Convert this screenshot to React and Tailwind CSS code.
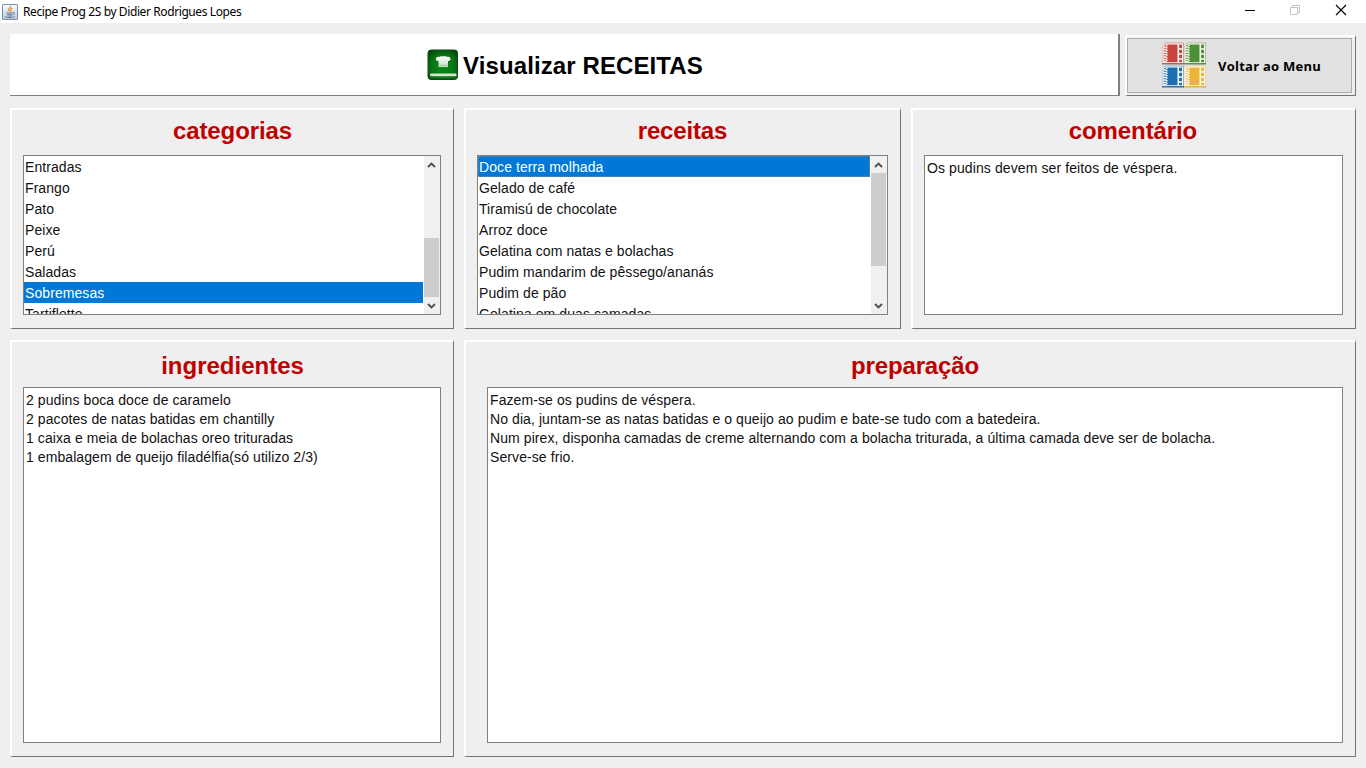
import React from 'react';

const categories = ['Entradas', 'Frango', 'Pato', 'Peixe', 'Perú', 'Saladas', 'Sobremesas', 'Tartiflette'];
const recipes = [
  'Doce terra molhada',
  'Gelado de café',
  'Tiramisú de chocolate',
  'Arroz doce',
  'Gelatina com natas e bolachas',
  'Pudim mandarim de pêssego/ananás',
  'Pudim de pão',
  'Gelatina em duas camadas',
];
const ingredients = [
  '2 pudins boca doce de caramelo',
  '2 pacotes de natas batidas em chantilly',
  '1 caixa e meia de bolachas oreo trituradas',
  '1 embalagem de queijo filadélfia(só utilizo 2/3)',
];
const preparation = [
  'Fazem-se os pudins de véspera.',
  'No dia, juntam-se as natas batidas e o queijo ao pudim e bate-se tudo com a batedeira.',
  'Num pirex, disponha camadas de creme alternando com a bolacha triturada, a última camada deve ser de bolacha.',
  'Serve-se frio.',
];

function JavaIcon() {
  return (
    <svg width="16" height="16" viewBox="0 0 16 16" fill="none">
      <defs>
        <linearGradient id="java" x1="0" y1="0" x2="0" y2="1">
          <stop stopColor="#fdfdfd" />
          <stop offset="1" stopColor="#b9cadb" />
        </linearGradient>
      </defs>
      <rect x="0.5" y="0.5" width="15" height="15" rx="0.5" fill="url(#java)" stroke="#7690ab" />
      <path d="M8.800 1.800c.8 1.700-3.200 2.500-2.300 4.200.3.600.9 1 .9 1.600M10.300 4.200c-1.500.7-2.400 1.400-1.600 2.300.5.600.2 1-.3 1.400" stroke="#e2963f" strokeWidth="1.300" />
      <path d="M4.500 8.700c1.800.7 4.500.6 6.200 0M5.200 10.300c1.500.6 3.700.6 5.200 0M5.600 11.700c1.200.5 3 .5 4.200 0M11 8.600c2.200-.5 2 1.700.2 2.200M3.200 12.700c2.300 1.100 7.300 1 9.400-.1" stroke="#587896" strokeWidth="1" />
    </svg>
  );
}

function BookIcon() {
  return (
    <svg width="32" height="32" viewBox="0 0 32 32">
      <defs>
        <radialGradient id="cover" cx="0.5" cy="0.55" r="0.65">
          <stop stopColor="#0a8a18" />
          <stop offset="0.6" stopColor="#067512" />
          <stop offset="1" stopColor="#04480c" />
        </radialGradient>
        <linearGradient id="hat" x1="0" y1="0" x2="0" y2="1">
          <stop stopColor="#ffffff" />
          <stop offset="1" stopColor="#c3dfc3" />
        </linearGradient>
      </defs>
      <rect x="1" y="1" width="29.500" height="29.500" rx="3" fill="url(#cover)" stroke="#0a4a12" />
      <path d="M3.500 24.500h26v2.800h-25c-1.500 0-2-1.300-1-2.800z" fill="#cfe8cb" />
      <path d="M2.500 28.500h27" stroke="#1c6d22" />
      <path d="M11.500 18v-6c-2 .3-2.800-.8-2.600-2.200.2-1.700 1.900-2.500 3.400-1.900.8-.9 2-.9 2.700-.3.700-.6 1.800-.6 2.500 0 .8-.6 2-.5 2.700.3 1.500-.6 3.200.2 3.300 1.900.1 1.400-.8 2.500-2.500 2.200v6z" fill="url(#hat)" />
      <path d="M11.800 16.300h8.900" stroke="#79ac79" strokeWidth="0.600" />
    </svg>
  );
}

function Notebook({ x, y, color, dark }) {
  return (
    <g transform={`translate(${x} ${y})`}>
      <path d="M3.500 .5h18V21H.5V3z" fill={color} stroke={color} strokeOpacity="0.45" />
      <path d="M3.500 1.300h17.200v19.200H1V3.300z" fill="none" stroke="#fffaf6" strokeWidth="1.300" />
      <path d="M4.800 2v18.500" stroke="#fffaf6" strokeWidth="1.500" strokeDasharray="1.500 1" />
      <path d="M1.500 4.500h3M1.500 7h3M1.500 9.500h3M1.500 12h3M1.500 14.500h3M1.500 17h3M1.500 19.300h3" stroke="#fffaf6" strokeWidth="1.400" />
      <path d="M16.300 1.500v19M16.300 6.500h4.500M16.300 11.500h4.500M16.300 16.500h4.500" stroke="#fffaf6" strokeWidth="1.600" />
      <path d="M0 21.300h22" stroke={dark} strokeWidth="1.200" />
    </g>
  );
}

function MenuIcon() {
  return (
    <svg width="46" height="48" viewBox="0 0 46 48" className="shrink-0">
      <Notebook x={1} y={0.5} color="#c9443e" dark="#8c5048" />
      <Notebook x={23} y={0.5} color="#4c9138" dark="#47743c" />
      <Notebook x={1} y={23.5} color="#1b6fb5" dark="#1b4f85" />
      <Notebook x={23} y={23.5} color="#edb536" dark="#d2a344" />
    </svg>
  );
}

function Panel({ title, className, titleClass = '', children }) {
  return (
    <section className={`flex flex-col border-t-2 border-l-2 border-t-white border-l-white border-r border-b border-r-[#747474] border-b-[#747474] ${className}`}>
      <h2 className={`shrink-0 text-center text-[24px] leading-[28px] font-bold text-[#c00000] ${titleClass}`}>{title}</h2>
      {children}
    </section>
  );
}

function Chevron({ up }) {
  return (
    <svg width="16" height="17" viewBox="0 0 16 17" fill="none" className="shrink-0">
      <path d={up ? 'M4 11 7.500 7.500 11 11' : 'M4 7 7.500 10.500 11 7'} stroke="#505050" strokeWidth="1.900" />
    </svg>
  );
}

function ScrollList({ items, selected, focus, before, thumb, className }) {
  return (
    <div className={`flex h-[160px] overflow-hidden border border-[#808080] bg-white ${className}`}>
      <ul className="min-w-0 flex-1 pr-px">
        {items.map((item) => (
          <li
            key={item}
            className={`h-[21px] pl-px text-[14px] leading-[22px] tracking-[0.08px] whitespace-nowrap ${
              item === selected ? 'bg-[#0078d7] text-white' : ''
            } ${item === selected && focus ? 'outline-1 -outline-offset-1 outline-dotted outline-[#7f8a92]' : ''}`}
          >
            {item}
          </li>
        ))}
      </ul>
      <div className="flex w-[16px] flex-col bg-[#f0f0f0]">
        <Chevron up />
        <div className={`shrink-0 ${before}`} />
        <div className={`mr-px shrink-0 bg-[#cdcdcd] ${thumb}`} />
        <div className="flex-1" />
        <Chevron />
      </div>
    </div>
  );
}

function TextArea({ lines, className }) {
  return (
    <div className={`border border-[#808080] bg-white px-[2px] pt-[3px] text-[14px] leading-[19px] whitespace-nowrap ${className}`}>
      {lines.map((line) => (
        <p key={line}>{line}</p>
      ))}
    </div>
  );
}

export default function App() {
  return (
    <div className="flex h-[768px] w-[1366px] flex-col overflow-hidden bg-[#efefef] font-['Liberation_Sans',Arial,sans-serif] text-[#111]">
      <header className="flex h-[23px] shrink-0 items-center bg-white pl-[2px]">
        <JavaIcon />
        <span className="ml-[5px] font-['Noto_Sans','Open_Sans',sans-serif] text-[12px] leading-[22px] tracking-[-0.4px] text-black">
          Recipe Prog 2S by Didier Rodrigues Lopes
        </span>
        <div className="mr-[19px] mb-[3px] ml-auto flex items-center gap-[34px]">
          <svg width="12" height="12" viewBox="0 0 12 12"><path d="M2 6.500h10" stroke="#000" /></svg>
          <svg width="12" height="12" viewBox="0 0 12 12" fill="none" stroke="#c2c2c2"><path d="M1.500 3.500h7v7h-7zM3.500 3V1.500h7v7H9" /></svg>
          <svg width="12" height="12" viewBox="0 0 12 12"><path d="M1 1l10 10M11 1 1 11" stroke="#000" strokeWidth="1.100" /></svg>
        </div>
      </header>

      <main className="flex flex-1 flex-col pt-[11px] pr-[10px] pb-[11px] pl-[10px]">
        <div className="flex gap-[5px]">
          <div className="flex h-[62px] w-[1110px] items-center justify-center gap-[4px] border-r-2 border-b border-[#808080] bg-white pl-[2px]">
            <BookIcon />
            <h1 className="pt-[2px] text-[24px] leading-[28px] font-bold tracking-[0.1px] text-black">Visualizar RECEITAS</h1>
          </div>
          <div className="mt-px h-[61px] w-[231px] border-t-2 border-r border-b border-l-2 border-t-white border-r-[#747474] border-b-[#747474] border-l-white pt-px pr-[3px] pb-[2px]">
            <button className="flex h-[55px] w-full items-center justify-center gap-[11px] border border-[#adadad] bg-[#e1e1e1] pl-[3px]">
              <MenuIcon />
              <span className="font-['Comic_Sans_MS','Open_Sans',sans-serif] text-[13px] leading-[20px] font-bold tracking-[0.25px] text-black">Voltar ao Menu</span>
            </button>
          </div>
        </div>

        <div className="mt-[12px] flex h-[221px] gap-[10px]">
          <Panel title="categorias" titleClass="tracking-[-0.1px]" className="w-[444px] pt-[7px]">
            <ScrollList items={categories} selected="Sobremesas" before="h-[65px]" thumb="h-[59px]" className="mt-[10px] mr-[12px] ml-[11px]" />
          </Panel>
          <Panel title="receitas" titleClass="tracking-[-0.15px] pr-px" className="w-[437px] pt-[7px]">
            <ScrollList items={recipes} selected="Doce terra molhada" focus before="h-0" thumb="h-[93px]" className="mt-[10px] mr-[12px] ml-[11px]" />
          </Panel>
          <Panel title="comentário" titleClass="tracking-[-0.1px] pr-[2px]" className="w-[445px] pt-[7px]">
            <TextArea lines={['Os pudins devem ser feitos de véspera.']} className="mt-[10px] mr-[12px] ml-[11px] h-[160px] tracking-[0.1px]" />
          </Panel>
        </div>

        <div className="mt-[11px] flex h-[417px] gap-[10px]">
          <Panel title="ingredientes" className="w-[444px] pt-[10px]">
            <TextArea lines={ingredients} className="mt-[7px] mr-[12px] ml-[11px] h-[356px] tracking-[0.08px]" />
          </Panel>
          <Panel title="preparação" titleClass="pl-[9px] tracking-[-0.15px]" className="w-[892px] pt-[10px]">
            <TextArea lines={preparation} className="mt-[7px] mr-[12px] ml-[21px] h-[356px] tracking-[0.085px]" />
          </Panel>
        </div>
      </main>
    </div>
  );
}
